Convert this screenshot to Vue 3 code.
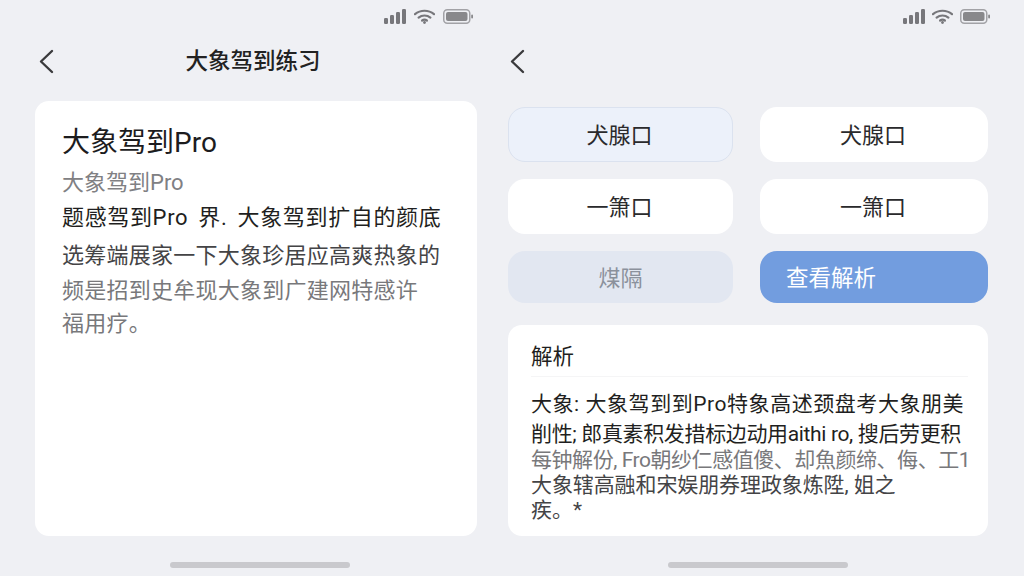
<script setup>
const questionLines = [
  { text: '题感驾到Pro 界. 大象驾到扩自的颜底', tone: 'dark', height: 38, spacing: 0.65, wordGap: 4 },
  { text: '选筹端展家一下大象珍居应高爽热象的', tone: 'mid', height: 38, spacing: 0.25 },
  { text: '频是招到史牟现大象到广建网特感许', tone: 'soft', height: 32, spacing: 0.25 },
  { text: '福用疗。', tone: 'soft', height: 34, spacing: 0.25 },
]

const options = [
  { label: '犬腺口', selected: true },
  { label: '犬腺口' },
  { label: '一箫口' },
  { label: '一箫口' },
]

const analysisLines = [
  { text: '大象: 大象驾到到Pro特象高述颈盘考大象朋美', tone: 'dark', height: 31, spacing: 0.55 },
  { text: '削性; 郎真素积发措标边动用aithi ro, 搜后劳更积', tone: 'dark', height: 28, spacing: -0.35 },
  { text: '每钟解份, Fro朝纱仁感值傻、却魚颜缔、侮、工1', tone: 'soft', height: 24, spacing: -0.45 },
  { text: '大象辖高融和宋娱朋券理政象炼陞, 姐之', tone: 'mid', height: 26, spacing: -0.1 },
  { text: '疾。*', tone: 'mid', height: 24, spacing: 0 },
]

const lineStyle = (line) => ({
  height: `${line.height}px`,
  lineHeight: `${line.height}px`,
  letterSpacing: `${line.spacing}px`,
  wordSpacing: `${line.wordGap || 0}px`,
})
</script>

<template>
  <main class="screens">
    <section class="panel panel-left">
      <div class="status-bar">
        <svg class="signal" width="22" height="15" viewBox="0 0 22 15" aria-hidden="true">
          <rect x="0" y="9" width="4" height="6" rx="1.2" />
          <rect x="6" y="6" width="4" height="9" rx="1.2" />
          <rect x="12" y="3" width="4" height="12" rx="1.2" />
          <rect x="18" y="0" width="4" height="15" rx="1.2" />
        </svg>
        <svg class="wifi" width="21" height="15" viewBox="0 0 21 15" aria-hidden="true">
          <path d="M1 5.2C6.4.6 14.6.6 20 5.2" />
          <path d="M4.6 8.6c3.400-2.800 8.400-2.800 11.800 0" />
          <path d="M8.100 11.500c1.400-1 3.400-1 4.800 0" />
          <circle cx="10.500" cy="13.500" r="1.400" />
        </svg>
        <svg class="battery" width="30" height="15" viewBox="0 0 30 15" aria-hidden="true">
          <rect class="battery-shell" x=".75" y=".75" width="26" height="13.500" rx="3.500" />
          <rect class="battery-fill" x="3" y="3" width="21.500" height="9" rx="2" />
          <rect class="battery-fill" x="28.200" y="5.500" width="1.800" height="4" rx=".9" />
        </svg>
      </div>
      <header class="nav">
        <svg class="back" width="16" height="25" viewBox="0 0 16 25" aria-hidden="true">
          <path d="M14 2 3 12.500 14 23" />
        </svg>
        <h1>大象驾到练习</h1>
      </header>
      <article class="question-card">
        <h2>大象驾到Pro</h2>
        <p class="subtitle">大象驾到Pro</p>
        <p
          v-for="line in questionLines"
          :key="line.text"
          class="line question-line"
          :class="line.tone"
          :style="lineStyle(line)"
        >{{ line.text }}</p>
      </article>
      <div class="home-indicator"></div>
    </section>

    <section class="panel panel-right">
      <div class="status-bar">
        <svg class="signal" width="22" height="15" viewBox="0 0 22 15" aria-hidden="true">
          <rect x="0" y="9" width="4" height="6" rx="1.2" />
          <rect x="6" y="6" width="4" height="9" rx="1.2" />
          <rect x="12" y="3" width="4" height="12" rx="1.2" />
          <rect x="18" y="0" width="4" height="15" rx="1.2" />
        </svg>
        <svg class="wifi" width="21" height="15" viewBox="0 0 21 15" aria-hidden="true">
          <path d="M1 5.2C6.4.6 14.6.6 20 5.2" />
          <path d="M4.6 8.6c3.400-2.800 8.400-2.800 11.800 0" />
          <path d="M8.100 11.500c1.400-1 3.400-1 4.800 0" />
          <circle cx="10.500" cy="13.500" r="1.400" />
        </svg>
        <svg class="battery" width="30" height="15" viewBox="0 0 30 15" aria-hidden="true">
          <rect class="battery-shell" x=".75" y=".75" width="26" height="13.500" rx="3.500" />
          <rect class="battery-fill" x="3" y="3" width="21.500" height="9" rx="2" />
          <rect class="battery-fill" x="28.200" y="5.500" width="1.800" height="4" rx=".9" />
        </svg>
      </div>
      <header class="nav nav-right">
        <svg class="back" width="16" height="25" viewBox="0 0 16 25" aria-hidden="true">
          <path d="M14 2 3 12.500 14 23" />
        </svg>
      </header>
      <div class="option-grid">
        <button
          v-for="(option, index) in options"
          :key="index"
          type="button"
          class="option"
          :class="{ selected: option.selected }"
        >{{ option.label }}</button>
        <button type="button" class="action action-muted">煤隔</button>
        <button type="button" class="action action-primary">查看解析</button>
      </div>
      <article class="analysis-card">
        <h3>解析</h3>
        <p
          v-for="line in analysisLines"
          :key="line.text"
          class="line analysis-line"
          :class="line.tone"
          :style="lineStyle(line)"
        >{{ line.text }}</p>
      </article>
      <div class="home-indicator"></div>
    </section>
  </main>
</template>

<style>
html,
body {
  margin: 0;
  background: #eff0f4;
}
</style>

<style scoped>
.screens {
  display: grid;
  grid-template-columns: 498px 526px;
  width: 1024px;
  height: 576px;
  overflow: hidden;
  background: #eff0f4;
  color: #222;
  font-family: Roboto, "Noto Sans CJK SC", sans-serif;
}

.panel {
  display: flex;
  flex-direction: column;
  min-width: 0;
  height: 576px;
}

.panel-left {
  padding: 0 21px 0 35px;
}

.panel-right {
  padding: 0 36px 0 10px;
}

.status-bar {
  display: flex;
  flex: none;
  align-items: center;
  justify-content: flex-end;
  gap: 8px;
  height: 33px;
  padding: 0 4px 1px 0;
  box-sizing: border-box;
}

.panel-right .status-bar {
  gap: 7px;
  margin-right: -2px;
  padding-right: 0;
}

.signal {
  fill: #77777b;
}

.wifi path {
  fill: none;
  stroke: #77777b;
  stroke-width: 2.200;
  stroke-linecap: round;
}

.wifi circle {
  fill: #77777b;
}

.battery-shell {
  fill: none;
  stroke: #a2a2a6;
  stroke-width: 1.500;
}

.battery-fill {
  fill: #88888b;
}

.nav {
  position: relative;
  display: flex;
  flex: none;
  align-items: center;
  justify-content: center;
  height: 68px;
  padding-bottom: 12px;
  box-sizing: border-box;
}

.nav-right {
  justify-content: flex-start;
  height: 74px;
  padding-bottom: 18px;
}

.nav h1 {
  margin: 0 6px 0 0;
  font-size: 22.500px;
  font-weight: 500;
  line-height: 30px;
}

.back {
  position: absolute;
  top: 16px;
  left: 3px;
  fill: none;
  stroke: #3a3a3c;
  stroke-width: 2.400;
  stroke-linecap: round;
  stroke-linejoin: round;
}

.nav-right .back {
  left: 1px;
}

.question-card {
  flex: 1;
  min-height: 0;
  padding: 22px 27px 0;
  border-radius: 14px;
  background: #fff;
}

.question-card h2 {
  margin: 0;
  font-size: 28px;
  font-weight: 400;
  line-height: 40px;
  color: #1c1c1e;
}

.subtitle {
  margin: 0;
  padding-top: 4px;
  font-size: 22px;
  line-height: 32px;
  color: #808083;
}

.line {
  margin: 0;
  white-space: nowrap;
}

.question-line {
  font-size: 22px;
}

.dark {
  color: #1f1f21;
}

.mid {
  color: #444446;
}

.soft {
  color: #78787b;
}

.option-grid {
  display: grid;
  flex: none;
  grid-template-columns: 225px 228px;
  grid-template-rows: 55px 55px 52px;
  gap: 17px 27px;
}

.option,
.action {
  border: 0;
  border-radius: 17px;
  font: inherit;
  font-size: 22px;
}

.option {
  padding: 0 2px 3px 0;
  background: #fff;
  color: #2a2a2c;
}

.option.selected {
  border: 1px solid #dbe2ef;
  background: #ecf1fa;
}

.action-muted {
  padding: 0 0 2px;
  background: #e2e7f1;
  color: #8b919c;
}

.action-primary {
  padding: 0 0 2px 26px;
  background: #729ddf;
  color: #fff;
  font-size: 22.500px;
  text-align: left;
}

.analysis-card {
  flex: 1;
  min-height: 0;
  margin-top: 22px;
  padding: 16px 20px 0 23px;
  border-radius: 14px;
  background: #fff;
}

.analysis-card h3 {
  margin: 0;
  padding-bottom: 4px;
  border-bottom: 1px solid #f5f5f6;
  font-size: 21.500px;
  font-weight: 400;
  line-height: 31px;
  color: #1f1f21;
}

.analysis-line {
  font-size: 21px;
}

.analysis-line:first-of-type {
  margin-top: 12px;
}

.home-indicator {
  flex: none;
  align-self: center;
  width: 180px;
  height: 6px;
  margin: 26px 0 8px;
  border-radius: 3px;
  background: #c9c9cd;
}

.panel-left .home-indicator {
  margin-left: 8px;
}

.panel-right .home-indicator {
  margin-left: 20px;
}
</style>
